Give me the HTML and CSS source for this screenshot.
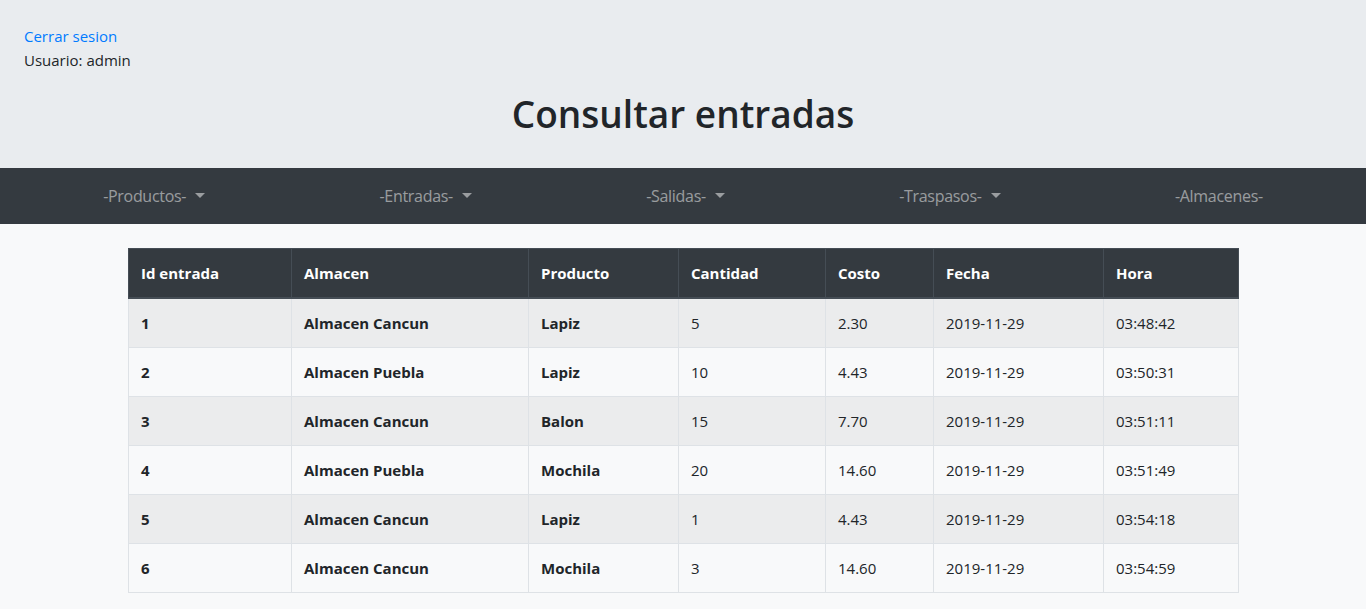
FILE: index.html
```html
<!DOCTYPE html>
<html lang="es">
<head>
<meta charset="utf-8">
<title>Consultar entradas</title>
<link rel="stylesheet" href="styles.css">
</head>
<body>
<header class="jumbotron">
  <a class="logout" href="#">Cerrar sesion</a>
  <p class="user">Usuario: admin</p>
  <h1 class="title">Consultar entradas</h1>
</header>
<nav class="navbar">
  <a class="nav-link dropdown" href="#">-Productos-</a>
  <a class="nav-link dropdown" href="#">-Entradas-</a>
  <a class="nav-link dropdown" href="#">-Salidas-</a>
  <a class="nav-link dropdown" href="#">-Traspasos-</a>
  <a class="nav-link" href="#">-Almacenes-</a>
</nav>
<main class="container">
  <table class="table">
    <colgroup>
      <col class="c1"><col class="c2"><col class="c3"><col class="c4"><col class="c5"><col class="c6"><col class="c7">
    </colgroup>
    <thead>
      <tr><th>Id entrada</th><th>Almacen</th><th>Producto</th><th>Cantidad</th><th>Costo</th><th>Fecha</th><th>Hora</th></tr>
    </thead>
    <tbody>
      <tr><th>1</th><th>Almacen Cancun</th><th>Lapiz</th><td>5</td><td>2.30</td><td>2019-11-29</td><td>03:48:42</td></tr>
      <tr><th>2</th><th>Almacen Puebla</th><th>Lapiz</th><td>10</td><td>4.43</td><td>2019-11-29</td><td>03:50:31</td></tr>
      <tr><th>3</th><th>Almacen Cancun</th><th>Balon</th><td>15</td><td>7.70</td><td>2019-11-29</td><td>03:51:11</td></tr>
      <tr><th>4</th><th>Almacen Puebla</th><th>Mochila</th><td>20</td><td>14.60</td><td>2019-11-29</td><td>03:51:49</td></tr>
      <tr><th>5</th><th>Almacen Cancun</th><th>Lapiz</th><td>1</td><td>4.43</td><td>2019-11-29</td><td>03:54:18</td></tr>
      <tr><th>6</th><th>Almacen Cancun</th><th>Mochila</th><td>3</td><td>14.60</td><td>2019-11-29</td><td>03:54:59</td></tr>
    </tbody>
  </table>
</main>
</body>
</html>
```
FILE: styles.css
```css
* { box-sizing: border-box; }
html, body { margin: 0; padding: 0; }
body {
  background: #f8f9fa;
  color: #212529;
  font-family: "Open Sans", "Noto Sans", "DejaVu Sans", sans-serif;
  font-size: 15px;
  line-height: 24px;
}
.jumbotron {
  background: #e9ecef;
  padding: 24px 24px 30px;
  display: flex;
  flex-direction: column;
  align-items: flex-start;
}
.logout {
  color: #007bff;
  text-decoration: none;
}
.user { margin: 0; }
.title {
  align-self: stretch;
  text-align: center;
  margin: 18px 0 0;
  font-size: 37px;
  font-weight: 600;
  line-height: 48px;
  color: #212529;
}
.navbar {
  background: #343a40;
  height: 56px;
  padding: 0 16px;
  display: flex;
  align-items: center;
  justify-content: space-around;
}
.nav-link {
  color: rgba(255,255,255,.5);
  text-decoration: none;
  padding: 8px;
  font-size: 16px;
  letter-spacing: -0.3px;
}
.dropdown::after {
  content: "";
  display: inline-block;
  margin-left: 9px;
  vertical-align: 4px;
  border-top: 5px solid;
  border-left: 5px solid transparent;
  border-right: 5px solid transparent;
}
.container {
  width: 1110px;
  margin: 24px auto 0;
}
.table {
  width: 100%;
  border-collapse: collapse;
  table-layout: fixed;
  font-size: 15px;
}
.c1 { width: 163px; }
.c2 { width: 237px; }
.c3 { width: 150px; }
.c4 { width: 147px; }
.c5 { width: 108px; }
.c6 { width: 170px; }
.c7 { width: 135px; }
.table th, .table td {
  padding: 12px;
  text-align: left;
  vertical-align: top;
  border: 1px solid #dee2e6;
  line-height: 24px;
}
.table th { font-weight: 700; }
.table td { font-weight: 400; }
.table thead th {
  background: #343a40;
  color: #fff;
  border-color: #454d55;
  border-bottom: 2px solid #454d55;
}
.table tbody tr:nth-child(odd) { background: #ebeced; }
```
